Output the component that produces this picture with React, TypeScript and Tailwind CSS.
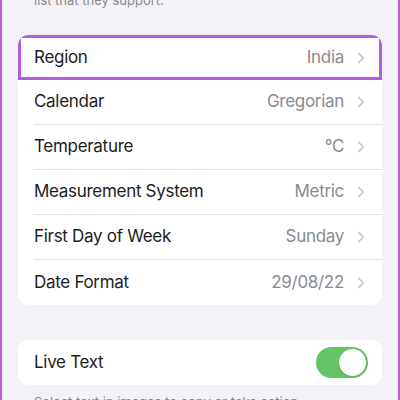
import { ChevronRight } from "lucide-react";

const rows = [
  { label: "Calendar", value: "Gregorian" },
  { label: "Temperature", value: "°C" },
  { label: "Measurement System", value: "Metric" },
  { label: "First Day of Week", value: "Sunday" },
  { label: "Date Format", value: "29/08/22" },
];

function Row({ label, value, last }: { label: string; value: string; last?: boolean }) {
  return (
    <div className="flex h-[45px] items-center pl-4">
      <div className={`flex h-full flex-1 items-center pr-[12px] ${last ? "" : "border-b border-[#e3e3e6]"}`}>
        <span className="flex-1 text-[17px] tracking-[-0.3px] text-[#1c1c1e]">{label}</span>
        <span className="text-[17px] tracking-[-0.3px] text-[#8a8a8e]">{value}</span>
        <ChevronRight className="ml-[8px] h-[18px] w-[18px] text-[#c4c4c7]" strokeWidth={2.2} />
      </div>
    </div>
  );
}

export default function App() {
  return (
    <div
      className="h-[400px] w-[400px] overflow-hidden border-x-2 border-[#b35ee0] bg-[#f2f2f7]"
      style={{ fontFamily: "Inter, 'Noto Sans', sans-serif" }}
    >
      <div className="px-4">
        <p className="-mt-[9px] pl-4 text-[13px] leading-[18px] text-[#8a8a8e]">list that they support.</p>

        <div className="mt-[26px] overflow-hidden rounded-[10px] bg-white">
          <div className="flex h-[45px] items-center border-[3px] border-[#b35ee0] pl-[13px] pr-[9px]">
            <span className="flex-1 text-[17px] tracking-[-0.3px] text-[#1c1c1e]">Region</span>
            <span className="text-[17px] tracking-[-0.3px] text-[#8a8a8e]">India</span>
            <ChevronRight className="ml-[8px] h-[18px] w-[18px] text-[#c4c4c7]" strokeWidth={2.2} />
          </div>
          {rows.map((r, i) => (
            <Row key={r.label} label={r.label} value={r.value} last={i === rows.length - 1} />
          ))}
        </div>

        <div className="mt-[35px] flex h-[45px] items-center rounded-[10px] bg-white pl-4 pr-[14px]">
          <span className="flex-1 text-[17px] tracking-[-0.3px] text-[#1c1c1e]">Live Text</span>
          <div className="flex h-[31px] w-[52px] items-center justify-end rounded-full bg-[#65c466] p-[2px]">
            <div className="h-[27px] w-[27px] rounded-full bg-white shadow" />
          </div>
        </div>

        <p className="mt-[8px] pl-4 text-[13px] leading-[18px] text-[#8a8a8e]">
          Select text in images to copy or take action.
        </p>
      </div>
    </div>
  );
}
